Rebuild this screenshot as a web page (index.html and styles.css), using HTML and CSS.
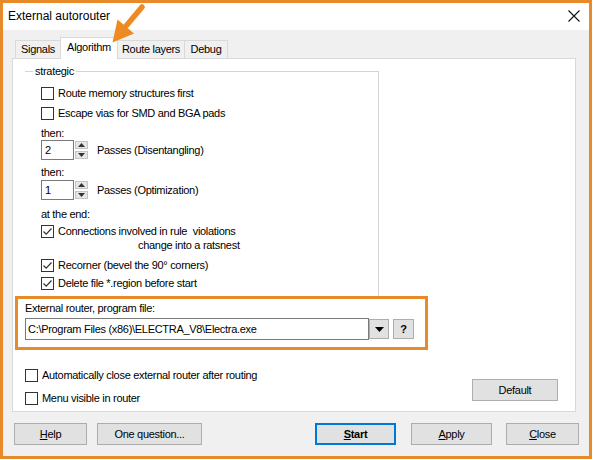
FILE: index.html
```html
<!DOCTYPE html>
<html>
<head>
<meta charset="utf-8">
<title>External autorouter</title>
<link rel="stylesheet" href="styles.css">
</head>
<body>
<div class="window">
  <div class="titlebar">
    <span class="title">External autorouter</span>
    <svg class="close" width="12" height="12" viewBox="0 0 12 12"><path d="M0.5 0.5 L11.5 11.5 M11.5 0.5 L0.5 11.5" stroke="#111" stroke-width="1.1" fill="none"/></svg>
  </div>
  <div class="client">
    <div class="tabs">
      <div class="tab t-signals">Signals</div>
      <div class="tab active t-algo">Algorithm</div>
      <div class="tab t-route">Route layers</div>
      <div class="tab t-debug">Debug</div>
    </div>
    <div class="panel">
      <div class="group">
        <div class="legend">strategic</div>
        <div class="check r-first"><span class="box"></span><span>Route memory structures first</span></div>
        <div class="check"><span class="box"></span><span>Escape vias for SMD and BGA pads</span></div>
        <div class="text then1">then:</div>
        <div class="spinrow">
          <div class="spin-input">2</div>
          <div class="spin-btns">
            <div class="sbtn"><svg width="7" height="4" viewBox="0 0 7 4"><path d="M0 4 L3.5 0 L7 4 Z" fill="#333"/></svg></div>
            <div class="sbtn"><svg width="7" height="4" viewBox="0 0 7 4"><path d="M0 0 L3.5 4 L7 0 Z" fill="#333"/></svg></div>
          </div>
          <span class="spin-label">Passes (Disentangling)</span>
        </div>
        <div class="text then2">then:</div>
        <div class="spinrow spin2">
          <div class="spin-input">1</div>
          <div class="spin-btns">
            <div class="sbtn"><svg width="7" height="4" viewBox="0 0 7 4"><path d="M0 4 L3.5 0 L7 4 Z" fill="#333"/></svg></div>
            <div class="sbtn"><svg width="7" height="4" viewBox="0 0 7 4"><path d="M0 0 L3.5 4 L7 0 Z" fill="#333"/></svg></div>
          </div>
          <span class="spin-label">Passes (Optimization)</span>
        </div>
        <div class="text atend">at the end:</div>
        <div class="check multi">
          <span class="box checked"><svg width="11" height="11" viewBox="0 0 11 11"><path d="M1.5 5.5 L4.2 8.2 L9.5 2.5" stroke="#333" stroke-width="1.2" fill="none"/></svg></span>
          <div class="lines"><div>Connections involved in rule&nbsp; violations</div><div class="indent">change into a ratsnest</div></div>
        </div>
        <div class="check short r-recorner"><span class="box checked"><svg width="11" height="11" viewBox="0 0 11 11"><path d="M1.5 5.5 L4.2 8.2 L9.5 2.5" stroke="#333" stroke-width="1.2" fill="none"/></svg></span><span>Recorner (bevel the 90° corners)</span></div>
        <div class="check short"><span class="box checked"><svg width="11" height="11" viewBox="0 0 11 11"><path d="M1.5 5.5 L4.2 8.2 L9.5 2.5" stroke="#333" stroke-width="1.2" fill="none"/></svg></span><span>Delete file *.region before start</span></div>
      </div>
      <div class="highlight">
        <div class="text">External router, program file:</div>
        <div class="combo-row">
          <div class="combo-input">C:\Program Files (x86)\ELECTRA_V8\Electra.exe</div>
          <div class="mini-btn"><svg width="9" height="5" viewBox="0 0 9 5"><path d="M0 0 L9 0 L4.5 5 Z" fill="#000"/></svg></div>
          <div class="mini-btn q">?</div>
        </div>
      </div>
      <div class="lower">
        <div class="lower-checks">
          <div class="check short"><span class="box"></span><span>Automatically close external router after routing</span></div>
          <div class="check short r-menu"><span class="box"></span><span>Menu visible in router</span></div>
        </div>
        <div class="btn default">Default</div>
      </div>
    </div>
    <div class="buttons">
      <div class="btn b-help"><u>H</u>elp</div>
      <div class="btn b-question">One question...</div>
      <div class="btn b-start"><u>S</u>tart</div>
      <div class="btn b-apply"><u>A</u>pply</div>
      <div class="btn b-close"><u>C</u>lose</div>
    </div>
  </div>
  <svg class="arrow" width="50" height="50" viewBox="0 0 50 50">
    <path d="M42 7 L26.5 25.5" stroke="#ee8a22" stroke-width="5.5" stroke-linecap="round" fill="none"/>
    <path d="M12.5 42.5 L17.5 19.5 L34 33.5 Z" fill="#ee8a22"/>
  </svg>
</div>
</body>
</html>
```
FILE: styles.css
```css
* { box-sizing: border-box; }
html, body { margin: 0; padding: 0; background: #ffffff; }
body {
  font-family: "Liberation Sans", Arial, sans-serif;
  font-size: 11px;
  letter-spacing: -0.3px;
  color: #000;
}
.window {
  position: relative;
  width: 592px;
  height: 459px;
  border: 3px solid #e98a2a;
  display: flex;
  flex-direction: column;
  background: #f0f0f0;
}
.titlebar {
  height: 27px;
  background: #fff;
  display: flex;
  align-items: center;
  justify-content: space-between;
  padding: 0 9px 0 5px;
}
.title {
  font-size: 12px;
  letter-spacing: 0;
  line-height: 27px;
}
.close { display: block; margin-top: -1px; }
.client {
  flex: 1;
  display: flex;
  flex-direction: column;
  background: #f0f0f0;
}
.tabs {
  margin-top: 7px;
  height: 21px;
  display: flex;
  align-items: flex-end;
  padding-left: 12px;
}
.tab {
  height: 18px;
  line-height: 17px;
  text-align: center;
  border: 1px solid #d9d9d9;
  border-bottom: none;
  background: #f0f0f0;
}
.tab.active {
  height: 22px;
  line-height: 19px;
  margin-bottom: -1px;
  background: #fff;
  position: relative;
  z-index: 1;
}
.t-signals { width: 46px; }
.t-algo { width: 58px; margin-left: -1px; }
.t-route { width: 68px; margin-left: -1px; }
.t-debug { width: 44px; margin-left: -1px; }
.panel {
  margin-left: 9px;
  width: 564px;
  height: 354px;
  border: 1px solid #d9d9d9;
  background: #fff;
}
.group {
  margin-top: 12px;
  margin-left: 12px;
  width: 354px;
  height: 225px;
  border-top: 1px solid #d5d5d5;
  border-right: 1px solid #d5d5d5;
  padding-left: 16px;
}
.legend {
  width: fit-content;
  margin-top: -8px;
  margin-left: -8px;
  padding: 0 2px;
  height: 14px;
  line-height: 14px;
  background: #fff;
}
.check {
  display: flex;
  align-items: center;
  height: 20px;
}
.check.short { height: 18px; }
.r-first { margin-top: 5px; }
.box {
  width: 13px;
  height: 13px;
  border: 1px solid #333;
  background: #fff;
  margin-right: 4px;
  flex: none;
  display: flex;
  align-items: center;
  justify-content: center;
}
.box svg { display: block; }
.text { height: 14px; line-height: 14px; }
.then1 { margin-top: 3px; }
.then2 { margin-top: 5px; }
.atend { margin-top: 7px; }
.spinrow {
  display: flex;
  align-items: center;
  height: 20px;
}
.spin2 { margin-top: 1px; }
.spin-input {
  width: 33px;
  height: 20px;
  border: 1px solid #7a7a7a;
  padding-left: 3px;
  line-height: 18px;
}
.spin-btns {
  margin-left: 1px;
  width: 13px;
  height: 18px;
  display: flex;
  flex-direction: column;
  justify-content: space-between;
}
.sbtn {
  height: 8px;
  background: #e6e6e6;
  border: 1px solid #c4c4c4;
  display: flex;
  align-items: center;
  justify-content: center;
}
.sbtn svg { display: block; }
.spin-label { margin-left: 9px; }
.check.multi {
  margin-top: 3px;
  height: auto;
  align-items: flex-start;
}
.check.multi .box { margin-top: 1px; }
.lines { line-height: 14px; }
.indent { margin-left: 80px; }
.r-recorner { margin-top: 4px; }
.highlight {
  margin-left: 2px;
  width: 413px;
  height: 54px;
  border: 3px solid #e98a2a;
  padding: 2px 0 0 7px;
}
.combo-row {
  margin-top: 3px;
  height: 22px;
  display: flex;
  align-items: center;
}
.combo-input {
  width: 344px;
  height: 22px;
  border: 1px solid #7a7a7a;
  padding-left: 2px;
  line-height: 20px;
  background: #fff;
}
.mini-btn {
  width: 20px;
  height: 20px;
  background: #e1e1e1;
  border: 1px solid #adadad;
  display: flex;
  align-items: center;
  justify-content: center;
}
.mini-btn svg { display: block; }
.mini-btn.q {
  width: 21px;
  margin-left: 4px;
  font-weight: bold;
  font-size: 11px;
}
.lower {
  margin-top: 16px;
  display: flex;
  justify-content: space-between;
  align-items: flex-start;
  padding: 0 17px 0 12px;
}
.r-menu { margin-top: 5px; }
.btn {
  height: 22px;
  line-height: 20px;
  text-align: center;
  background: #e1e1e1;
  border: 1px solid #adadad;
}
.default {
  width: 86px;
  margin-top: 13px;
}
.buttons {
  margin-top: 11px;
  display: flex;
  padding: 0 10px 0 11px;
}
.b-help { width: 73px; }
.b-question { width: 105px; margin-left: 10px; }
.b-start {
  width: 81px;
  margin-left: auto;
  border: 2px solid #0078d7;
  line-height: 18px;
  font-weight: bold;
}
.b-apply { width: 81px; margin-left: 15px; }
.b-close { width: 73px; margin-left: 14px; }
.arrow {
  position: absolute;
  left: 97px;
  top: -3px;
  z-index: 5;
}
```
